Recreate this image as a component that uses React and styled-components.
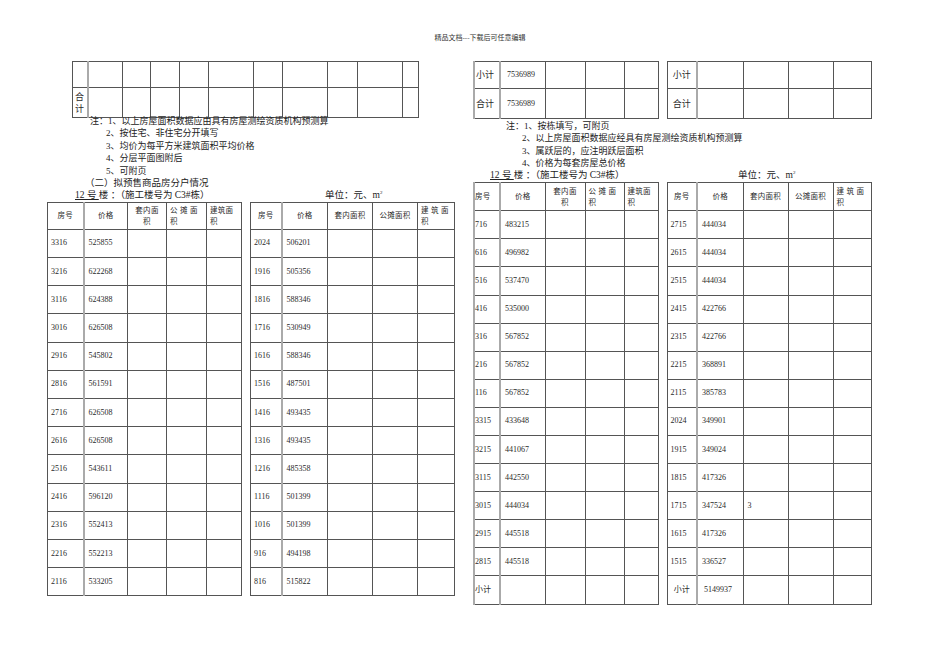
import styled, { createGlobalStyle } from "styled-components";

const GlobalStyle = createGlobalStyle`
  body {
    margin: 0;
    background: #fff;
    color: #222;
    font-family: "Liberation Serif", "Noto Sans CJK SC", serif;
  }
`;

const Page = styled.div`
  width: 950px;
  height: 672px;
  padding-top: 33px;
  box-sizing: border-box;
  overflow: hidden;
`;

const PageHeader = styled.div`
  height: 28px;
  padding-left: 10px;
  text-align: center;
  font-size: 7px;
  line-height: 10px;
  color: #333;
`;

const Columns = styled.div`
  display: flex;
  align-items: flex-start;
`;

const Column = styled.div`
  width: 410px;
  margin-left: ${(p) => p.$ml}px;
  display: flex;
  flex-direction: column;
`;

const Grid = styled.table`
  border-collapse: collapse;
  table-layout: fixed;
  width: ${(p) => p.$w}px;
  margin-left: ${(p) => p.$ml || 0}px;
  font-size: 8px;
  color: #2a2a2a;
  flex: none;
`;

const Row = styled.tr`
  height: ${(p) => p.$h}px;
`;

const Cell = styled.td`
  border: 1px solid #555;
  border-right: ${(p) => (p.$sep ? "2px solid #aaa" : "1px solid #555")};
  border-left: ${(p) => (p.$edge ? "2px solid #aaa" : "1px solid #555")};
  padding: 0 0 0 ${(p) => (p.$pl === undefined ? 3 : p.$pl)}px;
  text-align: ${(p) => p.$align || "left"};
  vertical-align: middle;
  white-space: nowrap;
  overflow: visible;
  line-height: 10px;
`;

const HeadCell = styled(Cell)`
  font-size: 7.5px;
  line-height: 11px;
  white-space: pre;
  letter-spacing: 0.3px;
`;

const StackCell = styled(Cell)`
  font-size: 9px;
  line-height: 12px;
  white-space: pre;
  padding-left: 2px;
`;

const TablePair = styled.div`
  display: flex;
  gap: ${(p) => p.$gap}px;
  margin-top: ${(p) => p.$mt || 0}px;
`;

const Notes = styled.div`
  margin-top: ${(p) => p.$mt}px;
  font-size: 9px;
  line-height: ${(p) => p.$lh}px;
  white-space: nowrap;
`;

const NoteLine = styled.div`
  padding-left: ${(p) => p.$ml}px;
`;

const SectionLine = styled.div`
  padding-left: ${(p) => p.$ml}px;
  font-size: 9.5px;
`;

const TitleRow = styled.div`
  display: flex;
  padding-left: ${(p) => p.$ml}px;
  font-size: 9.5px;
`;

const TitleLabel = styled.span`
  width: ${(p) => p.$w}px;
  flex: none;
`;

const Under = styled.span`
  text-decoration: underline;
  text-underline-offset: 1px;
`;

const Sup = styled.sup`
  font-size: 5px;
  vertical-align: 4px;
  line-height: 0;
`;

const Title = ({ ml, w }) => (
  <TitleRow $ml={ml}>
    <TitleLabel $w={w}>
      <Under>12 号 </Under> 楼 ：（施工楼号为 C3#栋）
    </TitleLabel>
    <span>
      单位：元、m<Sup>2</Sup>
    </span>
  </TitleRow>
);

const headA = [
  { t: "房号", a: "center" },
  { t: "价格", a: "center" },
  { t: "套内面\n积", a: "center" },
  { t: "公 摊 面\n积", a: "left" },
  { t: "建筑面\n积", a: "left" },
];

const headB = [
  { t: "房号", a: "center" },
  { t: "价格", a: "center" },
  { t: "套内面积", a: "center" },
  { t: "公摊面积", a: "center" },
  { t: "建 筑 面\n积", a: "left" },
];

const leftOne = [
  ["3316", "525855"], ["3216", "622268"], ["3116", "624388"], ["3016", "626508"],
  ["2916", "545802"], ["2816", "561591"], ["2716", "626508"], ["2616", "626508"],
  ["2516", "543611"], ["2416", "596120"], ["2316", "552413"], ["2216", "552213"],
  ["2116", "533205"],
];

const leftTwo = [
  ["2024", "506201"], ["1916", "505356"], ["1816", "588346"], ["1716", "530949"],
  ["1616", "588346"], ["1516", "487501"], ["1416", "493435"], ["1316", "493435"],
  ["1216", "485358"], ["1116", "501399"], ["1016", "501399"], ["916", "494198"],
  ["816", "515822"],
];

const rightOne = [
  ["716", "483215"], ["616", "496982"], ["516", "537470"], ["416", "535000"],
  ["316", "567852"], ["216", "567852"], ["116", "567852"], ["3315", "433648"],
  ["3215", "441067"], ["3115", "442550"], ["3015", "444034"], ["2915", "445518"],
  ["2815", "445518"], ["小计", ""],
];

const rightTwo = [
  ["2715", "444034"], ["2615", "444034"], ["2515", "444034"], ["2415", "422766"],
  ["2315", "422766"], ["2215", "368891"], ["2115", "385783"], ["2024", "349901"],
  ["1915", "349024"], ["1815", "417326"], ["1715", "347524", "3"], ["1615", "417326"],
  ["1515", "336527"], ["小计", "5149937"],
];

const UnitTable = ({ cols, head, rows, headH, rowH, edge, firstPl = 3 }) => (
  <Grid $w={cols.reduce((a, b) => a + b, 0)}>
    <colgroup>
      {cols.map((c, i) => (
        <col key={i} style={{ width: c }} />
      ))}
    </colgroup>
    <tbody>
      <Row $h={headH}>
        {head.map((h, i) => (
          <HeadCell
            key={i}
            $align={edge && i === 0 ? "left" : h.a}
            $pl={edge && i === 0 ? 0 : h.a === "left" ? 3 : 0}
            $sep={i === 0}
            $edge={edge && i === 0}
          >
            {h.t}
          </HeadCell>
        ))}
      </Row>
      {rows.map((r, i) => {
        const sub = r[0] === "小计";
        return (
          <Row key={i} $h={rowH}>
            <Cell
              $sep
              $edge={edge}
              $pl={sub && !edge ? 0 : firstPl}
              $align={sub && !edge ? "center" : "left"}
            >
              {r[0]}
            </Cell>
            <Cell $pl={sub ? 6 : 4}>{r[1]}</Cell>
            <Cell $pl={4}>{r[2] || ""}</Cell>
            <Cell />
            <Cell />
          </Row>
        );
      })}
    </tbody>
  </Grid>
);

const topCols = [15, 35, 28, 29, 29, 45, 29, 45, 30, 45, 16];

const SubtotalTable = ({ cols, values, edge }) => (
  <Grid $w={cols.reduce((a, b) => a + b, 0)}>
    <colgroup>
      {cols.map((c, i) => (
        <col key={i} style={{ width: c }} />
      ))}
    </colgroup>
    <tbody>
      {["小计", "合计"].map((label, i) => (
        <Row key={label} $h={i === 0 ? 27 : 30}>
          <Cell
            $sep
            $edge={edge}
            $pl={edge ? 1 : 0}
            $align={edge ? "left" : "center"}
            style={{ fontSize: 9 }}
          >
            {label}
          </Cell>
          <Cell $pl={6}>{values ? values[i] : ""}</Cell>
          <Cell />
          <Cell />
          <Cell />
        </Row>
      ))}
    </tbody>
  </Grid>
);

const colsA = [36, 44, 39, 40, 35];
const colsB = [31, 46, 45, 45, 37];
const colsRA = [26, 45, 40, 39, 34];
const colsRB = [30, 46, 45, 45, 38];

export default function App() {
  return (
    <Page>
      <GlobalStyle />
      <PageHeader>精品文档---下载后可任意编辑</PageHeader>
      <Columns>
        <Column $ml={47}>
          <Grid $w={346} $ml={25}>
            <colgroup>
              {topCols.map((c, i) => (
                <col key={i} style={{ width: c }} />
              ))}
            </colgroup>
            <tbody>
              <Row $h={26}>
                {topCols.map((_, i) => (
                  <Cell key={i} $sep={i === 0} />
                ))}
              </Row>
              <Row $h={30}>
                <StackCell $sep>{"合\n计"}</StackCell>
                {topCols.slice(1).map((_, i) => (
                  <Cell key={i} />
                ))}
              </Row>
            </tbody>
          </Grid>
          <Notes $mt={-3} $lh={12.4}>
            <NoteLine $ml={43}>注：1、以上房屋面积数据应由具有房屋测绘资质机构预测算</NoteLine>
            <NoteLine $ml={59}>2、按住宅、非住宅分开填写</NoteLine>
            <NoteLine $ml={59}>3、均价为每平方米建筑面积平均价格</NoteLine>
            <NoteLine $ml={59}>4、分层平面图附后</NoteLine>
            <NoteLine $ml={59}>5、可附页</NoteLine>
            <SectionLine $ml={38}>（二）拟预售商品房分户情况</SectionLine>
            <Title ml={28} w={250} />
          </Notes>
          <TablePair $gap={8}>
            <UnitTable cols={colsA} head={headA} rows={leftOne} headH={27} rowH={28.2} />
            <UnitTable cols={colsB} head={headB} rows={leftTwo} headH={27} rowH={28.2} />
          </TablePair>
        </Column>

        <Column $ml={16}>
          <TablePair $gap={8}>
            <SubtotalTable cols={colsRA} values={["7536989", "7536989"]} edge />
            <SubtotalTable cols={colsRB} />
          </TablePair>
          <Notes $mt={1} $lh={12.25}>
            <NoteLine $ml={33}>注：1、按栋填写，可附页</NoteLine>
            <NoteLine $ml={49}>2、以上房屋面积数据应经具有房屋测绘资质机构预测算</NoteLine>
            <NoteLine $ml={49}>3、属跃层的，应注明跃层面积</NoteLine>
            <NoteLine $ml={49}>4、价格为每套房屋总价格</NoteLine>
            <Title ml={17} w={248} />
          </Notes>
          <TablePair $gap={8} $mt={1}>
            <UnitTable cols={colsRA} head={headA} rows={rightOne} headH={28} rowH={28.1} edge firstPl={0} />
            <UnitTable cols={colsRB} head={headB} rows={rightTwo} headH={28} rowH={28.1} />
          </TablePair>
        </Column>
      </Columns>
    </Page>
  );
}
